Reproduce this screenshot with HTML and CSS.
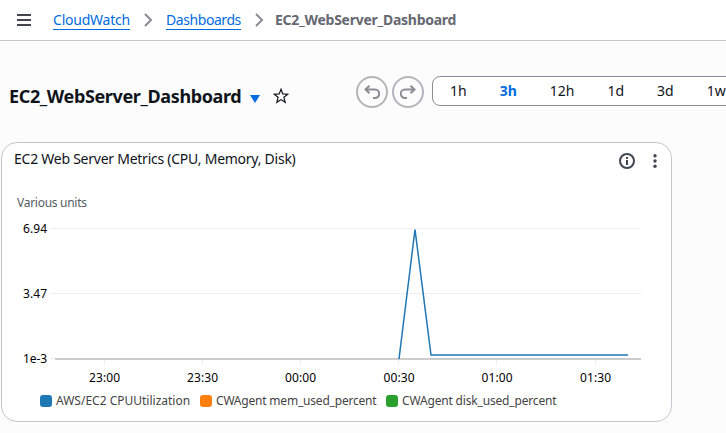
FILE: index.html
```html
<!DOCTYPE html>
<html lang="en">
<head>
<meta charset="utf-8">
<title>CloudWatch</title>
<link rel="stylesheet" href="styles.css">
</head>
<body>
<header class="topbar">
  <svg class="menu" width="14" height="12" viewBox="0 0 14 12"><path d="M0 1h14M0 6h14M0 11h14"/></svg>
  <nav class="crumbs">
    <a class="crumb crumb-service">CloudWatch</a>
    <svg class="chevron" width="9" height="14" viewBox="0 0 9 14"><path d="M1 1l6 6-6 6"/></svg>
    <a class="crumb crumb-section">Dashboards</a>
    <svg class="chevron last" width="9" height="14" viewBox="0 0 9 14"><path d="M1 1l6 6-6 6"/></svg>
    <span class="current">EC2_WebServer_Dashboard</span>
  </nav>
</header>
<section class="toolbar">
  <h1>EC2_WebServer_Dashboard</h1>
  <svg class="caret" width="10" height="8" viewBox="0 0 10 8"><path d="M0 0h10L5 8z"/></svg>
  <svg class="star" width="16" height="16" viewBox="0 0 16 16"><path d="M8 1.300l1.800 4.600 5 .3-3.900 3.100 1.300 5L8 11.600l-4.200 2.700 1.300-5L1.200 6.200l5-.3z"/></svg>
  <div class="history">
    <span class="round"><svg width="16" height="14" viewBox="0 0 16 14"><path d="M5.500 .8L1.500 4.500l4 3.700M1.500 4.500H11a4.200 4.200 0 0 1 0 8.400H9"/></svg></span>
    <span class="round"><svg width="16" height="14" viewBox="0 0 16 14"><path d="M10.500 .8l4 3.700-4 3.700M14.500 4.500H5a4.200 4.200 0 0 0 0 8.400h2"/></svg></span>
  </div>
  <div class="ranges">
    <span>1h</span><span class="active">3h</span><span>12h</span><span>1d</span><span>3d</span><span>1w</span>
  </div>
</section>
<main class="widget">
  <div class="widget-head">
    <h2>EC2 Web Server Metrics (CPU, Memory, Disk)</h2>
    <svg class="info" width="16" height="16" viewBox="0 0 16 16"><circle cx="8" cy="8" r="7"/><path d="M8 4v2M8 7v5"/></svg>
    <svg class="dots" width="4" height="14" viewBox="0 0 4 14"><circle cx="2" cy="1.700" r="1.700"/><circle cx="2" cy="7" r="1.700"/><circle cx="2" cy="12.300" r="1.700"/></svg>
  </div>
  <svg class="chart" width="668" height="210" viewBox="2 180 668 210">
    <text class="unit" x="17" y="207" textLength="70">Various units</text>
    <path class="grid" d="M50 228.500H641M50 293.500H641M50 358.500H55M104.500 360v5M202.500 360v5M300.500 360v5M398.500 360v5M496.500 360v5M595.500 360v5"/>
    <path class="axis" d="M55 359H641"/>
    <path class="series" d="M399 359L415 229.500L431 355H628"/>
    <g class="y-label">
      <text x="23" y="233" textLength="24">6.94</text>
      <text x="23" y="298" textLength="24">3.47</text>
      <text x="23" y="363" textLength="24">1e-3</text>
    </g>
    <g class="x-label">
      <text x="89" y="382" textLength="31">23:00</text>
      <text x="187" y="382" textLength="31">23:30</text>
      <text x="285" y="382" textLength="31">00:00</text>
      <text x="383.500" y="382" textLength="31">00:30</text>
      <text x="481.500" y="382" textLength="31">01:00</text>
      <text x="580" y="382" textLength="31">01:30</text>
    </g>
  </svg>
  <div class="legend">
    <span class="item cpu">AWS/EC2 CPUUtilization</span>
    <span class="item mem">CWAgent mem_used_percent</span>
    <span class="item disk">CWAgent disk_used_percent</span>
  </div>
</main>
</body>
</html>
```
FILE: styles.css
```css
* { box-sizing: border-box; }
body {
  margin: 0;
  height: 433px;
  overflow: hidden;
  background: #fcfcfd;
  color: #0f141a;
  font: 14px/20px "Noto Sans", sans-serif;
}
svg { display: block; flex: none; fill: none; }
h1, h2 { flex: none; margin: 0; white-space: nowrap; }
.topbar {
  display: flex;
  align-items: center;
  height: 41px;
  padding-left: 17px;
  background: #fff;
  border-bottom: 1px solid #c6c6cd;
}
.menu { stroke: #424650; stroke-width: 2; }
.crumbs { display: flex; align-items: center; margin-left: 22px; white-space: nowrap; }
.crumb {
  height: 20px;
  line-height: 20px;
  color: #006ce0;
  border-bottom: 1px solid #006ce0;
}
.crumb-service { width: 77px; letter-spacing: -0.22px; }
.crumb-section { width: 75px; letter-spacing: -0.43px; }
.chevron { margin: 0 13px 0 14px; stroke: #8c8c94; stroke-width: 2; }
.chevron.last { margin-right: 11px; }
.current { color: #656871; font-weight: 700; letter-spacing: -0.27px; }
.toolbar {
  display: flex;
  align-items: center;
  height: 101px;
  padding-left: 9px;
}
h1 { width: 241px; margin-top: 9px; font-size: 18px; line-height: 24px; letter-spacing: -0.37px; }
.caret { margin-top: 14px; fill: #006ce0; }
.star { margin: 9px 0 0 13px; stroke: #0f141a; stroke-width: 1.200; }
.history { display: flex; gap: 4px; margin-left: 67px; }
.round {
  display: flex;
  align-items: center;
  justify-content: center;
  width: 32px;
  height: 32px;
  border: 2px solid #b4b4bb;
  border-radius: 50%;
}
.round svg { margin-top: 1px; stroke: #8c8c94; stroke-width: 2; }
.ranges {
  display: flex;
  flex: none;
  align-items: center;
  gap: 33px;
  width: 320px;
  height: 30px;
  margin: -1px 0 0 8px;
  padding: 0 0 1px 17px;
  background: #fff;
  border: 1px solid #8c8c94;
  border-radius: 8px;
}
.active { color: #006ce0; font-weight: 700; }
.widget {
  width: 671px;
  height: 280px;
  margin-left: 1px;
  background: #fff;
  border: 1px solid #c6c6cd;
  border-radius: 16px;
}
.widget-head { display: flex; align-items: center; height: 37px; padding: 0 0 2px 12px; }
h2 { width: 605px; margin-top: -4px; font-size: 14px; font-weight: 400; line-height: 20px; letter-spacing: -0.25px; }
.info { stroke: #424650; stroke-width: 2; }
.dots { margin-left: 18px; fill: #424650; }
.chart { font-family: "Noto Sans", sans-serif; font-size: 12px; }
.unit { fill: #545b64; }
.y-label, .x-label { fill: #000; }
.grid { stroke: #eee; }
.axis { stroke: #ccc; stroke-width: 2; }
.series { stroke: #1f77b4; stroke-width: 1.500; }
.legend { display: flex; padding: 1px 0 0 38px; white-space: nowrap; font-size: 12px; line-height: 20px; color: #444; }
.item { display: flex; flex: none; align-items: center; width: 160px; }
.item::before { content: ""; flex: none; width: 12px; height: 12px; margin-right: 4px; border-radius: 3px; background: #1f77b4; }
.mem { width: 186px; letter-spacing: -0.2px; }
.mem::before { background: #ff7f0e; }
.disk { width: 175px; letter-spacing: -0.17px; }
.disk::before { background: #2ca02c; }
```
